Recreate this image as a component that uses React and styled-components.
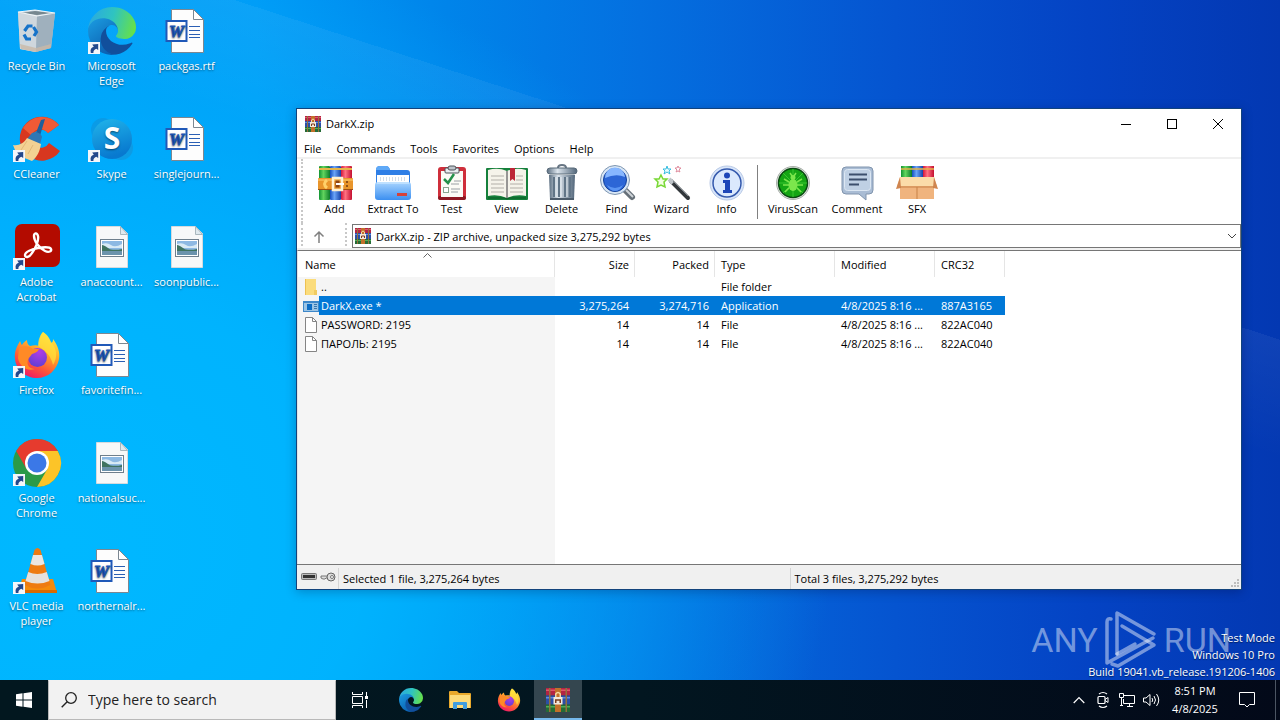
import React from 'react'
import styled, { createGlobalStyle } from 'styled-components'

/* ---------- shared drawings ---------- */

const Svg = styled.svg`
  display: block;
  flex: none;
  overflow: visible;
`

const ShortcutArrow = () => (
  <g>
    <rect x="0" y="35" width="12" height="12" fill="#f4f6fa" />
    <path d="M2.800 46C2 42.500 3.200 40.400 5.800 39.800L4.200 37.400 10.200 37v6L8.300 41.800C6.200 42.600 5.200 44 5.400 46z" fill="#23488c" />
  </g>
)

const RecycleBin = () => (
  <Svg width="48" height="48" viewBox="0 0 48 48" aria-hidden="true">
    <path d="M5 5 22 3l20 3-4 35-16 4-15-3z" fill="#b9c6cf" />
    <path d="M5 5l19 4-1 36-16-3z" fill="#cfd7dd" />
    <path d="M24 9l18-3-4 35-15 4z" fill="#9fb0bd" />
    <path d="M9 6l13-2 16 2-14 2z" fill="#76878f" />
    <path d="M5 5 22 3l20 3-18 3z" fill="none" stroke="#f2f6f8" strokeWidth="1.200" />
    <path d="M7 37l16 4 15-4-.5 4L23 45 8 42z" fill="#c9b9a8" opacity=".8" />
    <g fill="none" stroke="#1673c9" strokeWidth="3.200">
      <path d="M11.500 24l3.500-5h4.500" />
      <path d="M20.500 20l3 5-2.500 4" />
      <path d="M18 32h-4.500l-2.500-4.500" />
    </g>
  </Svg>
)

const EdgeLogo = ({ size = 48, shortcut }) => (
  <Svg width={size} height={size} viewBox="0 0 48 48" aria-hidden="true">
    <defs>
      <linearGradient id="edgeTop" x1="0" y1="0.300" x2="1" y2="0.500">
        <stop offset="0" stopColor="#2aa8e2" />
        <stop offset=".5" stopColor="#2fc4c0" />
        <stop offset="1" stopColor="#66e04a" />
      </linearGradient>
      <linearGradient id="edgeMid" x1="0" y1="0" x2="0.600" y2="1">
        <stop offset="0" stopColor="#1ca0e4" />
        <stop offset="1" stopColor="#0b5fb0" />
      </linearGradient>
    </defs>
    <g transform="scale(.1875)">
      <path
        transform="translate(-4.630 -4.920)"
        d="M235.680 195.460a93.730 93.730 0 0 1-10.540 4.710 101.870 101.870 0 0 1-35.900 6.460c-47.320 0-88.540-32.550-88.540-74.320A31.480 31.480 0 0 1 117.130 105c-42.800 1.800-53.800 46.400-53.800 72.530 0 73.880 68.090 81.370 82.760 81.370 7.910 0 19.840-2.300 27-4.560l1.310-.44a128.340 128.340 0 0 0 66.600-52.800 4 4 0 0 0-5.320-5.640z"
        fill="#114f9c"
      />
      <path
        d="M105.730 241.420A79.200 79.200 0 0 1 83 220.080a80.720 80.720 0 0 1 29.500-120c3.120-1.470 8.450-4.130 15.540-4a32.350 32.350 0 0 1 25.690 13 31.880 31.880 0 0 1 6.360 18.660c0-.21 24.460-79.600-80-79.600-43.900 0-80 41.660-80 78.210a130.150 130.150 0 0 0 12.110 56 128 128 0 0 0 156.380 67.110 75.550 75.550 0 0 1-62.780-8z"
        fill="url(#edgeMid)"
      />
      <path
        d="M152.330 148.860c-.81 1.050-3.300 2.500-3.300 5.660 0 2.610 1.700 5.120 4.720 7.230 14.380 10 41.490 8.680 41.560 8.680a59.560 59.560 0 0 0 30.270-8.350 61.380 61.380 0 0 0 30.430-52.880c.26-22.410-8-37.310-11.340-43.910C223.460 23.840 177.720 0 128 0A128 128 0 0 0 0 126.200c.48-36.540 36.800-66.050 80-66.050 3.500 0 23.460.34 42 10.070 16.340 8.580 24.900 18.940 30.850 29.210 6.180 10.670 7.280 24.150 7.280 29.520s-2.740 13.330-7.800 19.910z"
        fill="url(#edgeTop)"
      />
    </g>
    {shortcut && <ShortcutArrow />}
  </Svg>
)

const WordDoc = () => (
  <Svg width="48" height="48" viewBox="0 0 48 48" aria-hidden="true">
    <path d="M8.500 2.500h22l10 10v33h-32z" fill="#fdfdfd" stroke="#7c8791" />
    <path d="M30.500 2.500v10h10z" fill="#fff" stroke="#7c8791" />
    <path d="M26 19.500h11M26 23.500h11M26 27.500h11M26 30.500h11" stroke="#2b5fb4" />
    <rect x="3.500" y="14" width="20" height="20" fill="#fff" stroke="#2059b8" strokeWidth="2" />
    <text x="13.500" y="30" textAnchor="middle" fontFamily="Liberation Serif, serif" fontWeight="700" fontStyle="italic" fontSize="17" fill="#1c55b5" stroke="#1c55b5" strokeWidth=".8">W</text>
  </Svg>
)

const PictureDoc = () => (
  <Svg width="48" height="48" viewBox="0 0 48 48" aria-hidden="true">
    <path d="M8.500 3.500h24l7 7v34h-31z" fill="#f7f8f8" stroke="#d5dade" />
    <path d="M32.500 3.500v8h7z" fill="#dfe9ee" stroke="#a9b7bd" />
    <rect x="12.500" y="16.500" width="23" height="17" fill="#fff" stroke="#6f7f8c" />
    <rect x="14" y="18" width="20" height="14" fill="#8db9e3" />
    <path d="M14 21q5-2 9 1t11-1v4H14z" fill="#d8eaf5" />
    <path d="M14 22c3 0 6 4 9 4.500s7 .5 11-.5v3H14z" fill="#3f7360" />
    <path d="M14 28h20v4H14z" fill="#6b93ac" />
  </Svg>
)

const CCleaner = () => (
  <Svg width="48" height="48" viewBox="0 0 48 48" aria-hidden="true">
    <path d="M46 10A22 22 0 1 0 47 36L36 28a9 9 0 1 1-1-10z" fill="#d8371f" />
    <path d="M46 10A22 22 0 0 0 10 13l8 7q8-11 17-2z" fill="#f05a35" />
    <path d="M28 5l4-1-6 20-5-1z" fill="#1d5f9c" />
    <path d="M19 18c4-2 9 0 10 4l-2 7-13-5z" fill="#2f77b5" />
    <path d="M14 23l14 6c-1 7-4 13-9 17L4 40 0 30c6 1 11-2 14-7z" fill="#f3d193" />
    <path d="M14 26l-6 9M20 30l-5 9" stroke="#e2b877" fill="none" />
    <ShortcutArrow />
  </Svg>
)

const Skype = () => (
  <Svg width="48" height="48" viewBox="0 0 48 48" aria-hidden="true">
    <defs>
      <linearGradient id="skype" x1="0" y1="0" x2="0.300" y2="1">
        <stop offset="0" stopColor="#21b5ea" />
        <stop offset="1" stopColor="#0879cf" />
      </linearGradient>
    </defs>
    <circle cx="15" cy="15" r="12" fill="#0a9be6" />
    <circle cx="33" cy="33" r="12" fill="#0d9be4" />
    <circle cx="24" cy="24" r="20" fill="url(#skype)" />
    <text x="24" y="34" textAnchor="middle" fontFamily="Open Sans, sans-serif" fontWeight="700" fontSize="30" fill="#fff">S</text>
    <ShortcutArrow />
  </Svg>
)

const Acrobat = () => (
  <Svg width="48" height="48" viewBox="0 0 48 48" aria-hidden="true">
    <rect x="2" y="1" width="45" height="43" rx="7" fill="#b30b00" />
    <path
      d="M12 32c0-3 7-6 13-7s12-1 13 1-2 4-6 2c-6-3-11-10-11-15 0-3 3-4 4 0 1 5-3 13-6 17-3 5-7 5-7 2z"
      fill="none"
      stroke="#fff"
      strokeWidth="2.400"
      strokeLinejoin="round"
    />
    <ShortcutArrow />
  </Svg>
)

const Firefox = ({ size = 48, shortcut }) => (
  <Svg width={size} height={size} viewBox="0 0 48 48" aria-hidden="true">
    <defs>
      <linearGradient id="ffBody" x1="0.800" y1="0" x2="0.300" y2="1">
        <stop offset="0" stopColor="#fff04c" />
        <stop offset=".35" stopColor="#ffb52a" />
        <stop offset=".7" stopColor="#ff5a36" />
        <stop offset="1" stopColor="#ef1769" />
      </linearGradient>
      <radialGradient id="ffGlobe" cx=".6" cy=".2" r=".9">
        <stop offset="0" stopColor="#b13be8" />
        <stop offset="1" stopColor="#5a3fd0" />
      </radialGradient>
    </defs>
    <path d="M30 1c5 3 7 7 8 11 2-1 2-2 2-4 5 7 7 13 6 20-2 11-11 19-22 19S3 39 2 28C1 21 4 15 7 10c1 2 1 3 2 4 1-2 3-4 5-5 0 3 1 5 3 6 4-1 7-1 9 0 0-6 1-11 4-14z" fill="url(#ffBody)" />
    <path d="M30 1c5 4 7 9 11 14 3 6 3 13-1 19-2-9-7-14-15-19 0-6 2-11 5-14z" fill="#ffe23d" opacity=".7" />
    <circle cx="24.500" cy="26.500" r="9.500" fill="url(#ffGlobe)" />
    <path d="M6 17c5-3 11-2 14 1h6c-1 3-4 4-7 5-1 2-3 3-4 6-2 5 2 9 7 9-9 3-16-4-17-11z" fill="#ff8a26" />
    {shortcut && <ShortcutArrow />}
  </Svg>
)

const Chrome = () => (
  <Svg width="48" height="48" viewBox="0 0 48 48" aria-hidden="true">
    <circle cx="24" cy="24" r="24" fill="#2b9a48" />
    <path d="M3.200 12A24 24 0 0 1 44.800 12H24L13.600 30z" fill="#e63b2e" />
    <path d="M44.800 12A24 24 0 0 1 24 48l10.400-18L24 12z" fill="#fcc428" />
    <circle cx="24" cy="24" r="12" fill="#fff" />
    <circle cx="24" cy="24" r="9.500" fill="#3b78e7" />
    <ShortcutArrow />
  </Svg>
)

const Vlc = () => (
  <Svg width="48" height="48" viewBox="0 0 48 48" aria-hidden="true">
    <path d="M9 32h31l4 14H5z" fill="#f58a0b" />
    <path d="M5 43h39v3H5z" fill="#d96a00" />
    <path d="M21.500 3q3-4 6 0l10 35q-13 7-26 0z" fill="#ee7b12" />
    <path d="M20 8h9l2.500 9q-7 3-14 0z" fill="#ebe6e2" />
    <path d="M15.200 25q9 4 18.600 0l2.700 9q-12 5-24 0z" fill="#e6e1dd" />
    <ShortcutArrow />
  </Svg>
)

// stacked books tied with a strap, used for the window and taskbar
const ArchiveIcon = ({ size = 16 }) => (
  <Svg width={size} height={size} viewBox="0 0 16 16" aria-hidden="true">
    <rect x="0" y="0" width="16" height="5" fill="#b32443" />
    <rect x="0" y="1" width="16" height="1" fill="#e0586a" />
    <rect x="0" y="5" width="16" height="6" fill="#2c4fa6" />
    <rect x="0" y="6" width="16" height="1" fill="#5f8be0" />
    <rect x="0" y="11" width="16" height="5" fill="#256b36" />
    <rect x="0" y="12" width="16" height="1" fill="#4fae55" />
    <path d="M2 0h1v16H2zM13 0h1v16h-1z" fill="#94703c" />
    <rect x="6" y="0" width="4" height="16" fill="#c2702a" />
    <rect x="5" y="6" width="6" height="5" fill="#f3e8da" />
    <path d="M6.500 6V4q1.500-2 3 0v2" fill="none" stroke="#f3d9a4" />
    <path d="M6.500 10V8h3v2" fill="none" stroke="#7a3c1c" />
  </Svg>
)

/* ---------- toolbar drawings, all on a 36px canvas ---------- */

const ToolSvg = ({ width = 36, children }) => (
  <Svg width={width} height="36" viewBox={`0 0 ${width} 36`} aria-hidden="true">
    <defs>
      <linearGradient id="tbBlue" x1="0" y1="0" x2="0" y2="1">
        <stop offset="0" stopColor="#a9d5ff" />
        <stop offset="1" stopColor="#3b8ff0" />
      </linearGradient>
      <linearGradient id="tbSteel" x1="0" y1="0" x2="1" y2="0">
        <stop offset="0" stopColor="#5b6e80" />
        <stop offset=".35" stopColor="#dbe4ec" />
        <stop offset="1" stopColor="#52667a" />
      </linearGradient>
      <linearGradient id="tbGreenBook" x1="0" y1="0" x2="1" y2="0">
        <stop offset="0" stopColor="#119432" />
        <stop offset=".4" stopColor="#62d45e" />
        <stop offset="1" stopColor="#0c7d2a" />
      </linearGradient>
      <linearGradient id="tbBlueBook" x1="0" y1="0" x2="1" y2="0">
        <stop offset="0" stopColor="#154fc0" />
        <stop offset=".4" stopColor="#6ba4f7" />
        <stop offset="1" stopColor="#1442a8" />
      </linearGradient>
      <linearGradient id="tbRedBook" x1="0" y1="0" x2="1" y2="0">
        <stop offset="0" stopColor="#d3163a" />
        <stop offset=".4" stopColor="#ff7282" />
        <stop offset="1" stopColor="#c40f30" />
      </linearGradient>
    </defs>
    {children}
  </Svg>
)

const AddIcon = () => (
  <ToolSvg>
    <rect x="2" y="1" width="11" height="34" rx="1" fill="url(#tbGreenBook)" />
    <rect x="13" y="1" width="11" height="34" rx="1" fill="url(#tbBlueBook)" />
    <rect x="24" y="1" width="11" height="34" rx="1" fill="url(#tbRedBook)" />
    <path d="M2 4h11M13 4h11M24 4h11" stroke="#e6b64a" strokeWidth="2" />
    <rect x="1" y="13" width="35" height="12" rx="1" fill="#e9952b" />
    <path d="M1 15h35" stroke="#ffcf72" />
    <path d="M1 24.500h35" stroke="#9d4f12" />
    <path d="M10 15q-5 4 0 8" fill="none" stroke="#ffd06a" strokeWidth="3" />
    <rect x="16" y="13" width="9" height="12" fill="none" stroke="#fff0d0" strokeWidth="2.500" />
    <path d="M18.500 15.500h4v7h-4z" fill="#8d4312" />
    <path d="M19 19h8" stroke="#fff" strokeWidth="2" />
    <circle cx="30" cy="17" r="1" fill="#713a12" />
    <circle cx="30" cy="21" r="1" fill="#713a12" />
  </ToolSvg>
)

const ExtractIcon = () => (
  <ToolSvg>
    <path d="M1 5q0-4 4-4h6q3 0 4 4h17q3 0 3 3v14H1z" fill="#2f7fe6" />
    <path d="M1 5q0-4 4-4h6q3 0 4 4z" fill="#5fa9f7" />
    <path d="M2 10h32v8H2z" fill="#fff" />
    <path d="M5 13h27M5 15h27" stroke="#a6bcd2" strokeDasharray="1 2" />
    <rect x="0" y="17" width="36" height="18" rx="3" fill="url(#tbBlue)" />
    <path d="M2 18h32" stroke="#d9efff" />
    <rect x="22" y="28" width="10" height="3" fill="#d5423a" />
  </ToolSvg>
)

const TestIcon = () => (
  <ToolSvg>
    <rect x="4" y="2" width="28" height="33" rx="3" fill="#cf2f3b" />
    <rect x="4" y="31" width="28" height="4" rx="2" fill="#8e1822" />
    <rect x="7" y="6" width="22" height="26" fill="#fbfbf6" />
    <rect x="11" y="3" width="14" height="5" rx="1" fill="#e9edf0" stroke="#4d5358" />
    <rect x="14" y="1" width="8" height="4" rx="2" fill="#bcc4ca" stroke="#4d5358" />
    <path d="M10 14l4 4 6-9" fill="none" stroke="#25904a" strokeWidth="2.500" />
    <rect x="9.500" y="22.500" width="5" height="5" fill="#fff" stroke="#8aa58f" />
    <path d="M20 16h7M17 19h8M17 24h9M17 27h7" stroke="#9aa0a5" />
  </ToolSvg>
)

const ViewIcon = () => (
  <ToolSvg width={44}>
    <rect x="1" y="3" width="42" height="32" rx="1" fill="#15803b" />
    <path d="M3 5q10-3 19 1 9-4 19-1v26q-10-2-19 2-9-4-19-2z" fill="#f5f3ea" />
    <path d="M22 6v27" stroke="#777" strokeWidth="1.500" />
    <path d="M6 11h13M6 15h13M6 19h13M6 23h13M6 27h13M25 19h13M25 23h13M25 27h13M31 11h7M31 15h7" stroke="#b2afa8" />
    <path d="M25 3h5v13l-2.500-2-2.500 2z" fill="#bd2637" />
    <path d="M3 33h16l3 1 3-1h16" stroke="#0b5a25" fill="none" />
  </ToolSvg>
)

const DeleteIcon = () => (
  <ToolSvg>
    <path d="M14 3q0-3 4-3t4 3" fill="none" stroke="#687684" strokeWidth="2" />
    <rect x="3" y="3" width="30" height="6" rx="3" fill="url(#tbSteel)" stroke="#596a79" />
    <path d="M5 10h26l-1 25H6z" fill="url(#tbSteel)" />
    <path d="M10 12v20M15 12v20M21 12v20M26 12v20" stroke="#617587" strokeWidth="2" />
    <path d="M12 12v20M17 12v20M23 12v20" stroke="#e9f0f5" />
    <path d="M6 33h24v2H6z" fill="#4c5c6b" />
  </ToolSvg>
)

const FindIcon = () => (
  <ToolSvg>
    <path d="M27 26l6 6" stroke="#667078" strokeWidth="6" strokeLinecap="round" />
    <path d="M27 25l7 7" stroke="#cfd4d8" strokeWidth="2" />
    <circle cx="16" cy="15" r="14.500" fill="#d8e6f5" stroke="#7f97b2" />
    <circle cx="16" cy="15" r="11.500" fill="#2c66d6" stroke="#12419c" />
    <path d="M6 13a10 10 0 0 1 20-1q-9-4-20 1z" fill="#87b7ff" />
    <path d="M8 20q8 6 16 0-3 6-8 6t-8-6z" fill="#5a95f3" />
  </ToolSvg>
)

const WizardIcon = () => (
  <ToolSvg>
    <path d="M17 16l17 17" stroke="#33383c" strokeWidth="4" strokeLinecap="round" />
    <path d="M15 14l4 4" stroke="#bfc5ca" strokeWidth="4" />
    <path d="M19 16l15 15" stroke="#7d858b" />
    <path d="M7 10l2 4 4 0-3 3 1 5-4-2-4 2 1-5-3-3 4 0z" fill="#f2ffe2" stroke="#79d836" strokeWidth="1.500" />
    <path d="M13 1l1 3 3 0-2 2 1 3-3-2-3 2 1-3-2-2 3 0z" fill="#e6fbff" stroke="#39bde0" />
    <path d="M24 1l1 2 2 0-2 2 1 2-2-1-2 1 1-2-2-2 2 0z" fill="#fff" stroke="#df8b9d" />
  </ToolSvg>
)

const InfoIcon = () => (
  <ToolSvg>
    <circle cx="18" cy="18" r="17" fill="#d9e6fa" stroke="#b8c9e6" />
    <circle cx="18" cy="18" r="14" fill="#dbe9fd" stroke="#3459ad" strokeWidth="1.500" />
    <circle cx="18" cy="10.500" r="3" fill="#1d46b8" />
    <path d="M14 15h7v10h2v3h-9v-3h2v-7h-2z" fill="#1d46b8" />
  </ToolSvg>
)

const VirusIcon = () => (
  <ToolSvg>
    <circle cx="18" cy="18" r="16.500" fill="#dfe3df" stroke="#aab0ab" />
    <circle cx="18" cy="18" r="14.500" fill="#14a514" stroke="#0a4a12" strokeWidth="1.500" />
    <path d="M18 4v28M4 18h28M8 8l20 20M28 8L8 28" stroke="#41cf37" strokeWidth=".8" />
    <ellipse cx="18" cy="20" rx="4.500" ry="6" fill="#7be64c" />
    <circle cx="18" cy="12.500" r="2.500" fill="#7be64c" />
    <path d="M9 14l5 3M27 14l-5 3M8 20h6M28 20h-6M10 27l4-4M26 27l-4-4M15 8l2 3M21 8l-2 3" stroke="#7be64c" strokeWidth="1.500" />
  </ToolSvg>
)

const CommentIcon = () => (
  <ToolSvg>
    <path d="M7 2h23q4 0 4 4v19q0 4-4 4h-3v6l-7-6H7q-4 0-4-4V6q0-4 4-4z" fill="#a9bcd4" stroke="#8195ae" />
    <rect x="5.500" y="4.500" width="26" height="21" rx="3" fill="#bfd0e4" stroke="#dce7f3" />
    <path d="M10 9.500h18M10 14.500h18M10 19.500h10" stroke="#3c4f6d" strokeWidth="2" />
  </ToolSvg>
)

const SfxIcon = () => (
  <ToolSvg width={42}>
    <rect x="5" y="1" width="11" height="14" fill="url(#tbGreenBook)" />
    <rect x="16" y="1" width="11" height="14" fill="url(#tbBlueBook)" />
    <rect x="27" y="1" width="11" height="14" fill="url(#tbRedBook)" />
    <path d="M5 4h33" stroke="#e6b64a" strokeWidth="1.500" />
    <path d="M4 14h34v20H4z" fill="#f0b47e" />
    <path d="M4 12h34l3 9H1z" fill="#fbdca9" />
    <path d="M4 12L0 24l5-1zM38 12l4 12-5-1z" fill="#cf8550" />
    <path d="M21 22v12M4 22h34" stroke="#c78147" />
  </ToolSvg>
)

/* ---------- data ---------- */

const desktopIcons = [
  { label: 'Recycle Bin', icon: <RecycleBin /> },
  { label: 'CCleaner', icon: <CCleaner /> },
  { label: 'Adobe Acrobat', icon: <Acrobat /> },
  { label: 'Firefox', icon: <Firefox shortcut /> },
  { label: 'Google Chrome', icon: <Chrome /> },
  { label: 'VLC media player', icon: <Vlc /> },
  { label: 'Microsoft Edge', icon: <EdgeLogo shortcut /> },
  { label: 'Skype', icon: <Skype /> },
  { label: 'anaccount...', icon: <PictureDoc /> },
  { label: 'favoritefin...', icon: <WordDoc /> },
  { label: 'nationalsuc...', icon: <PictureDoc /> },
  { label: 'northernalr...', icon: <WordDoc /> },
  { label: 'packgas.rtf', icon: <WordDoc /> },
  { label: 'singlejourn...', icon: <WordDoc /> },
  { label: 'soonpublic...', icon: <PictureDoc /> },
]

const menus = ['File', 'Commands', 'Tools', 'Favorites', 'Options', 'Help']

const archiveTools = [
  { label: 'Add', icon: <AddIcon /> },
  { label: 'Extract To', icon: <ExtractIcon />, width: 62 },
  { label: 'Test', icon: <TestIcon /> },
  { label: 'View', icon: <ViewIcon /> },
  { label: 'Delete', icon: <DeleteIcon /> },
  { label: 'Find', icon: <FindIcon /> },
  { label: 'Wizard', icon: <WizardIcon /> },
  { label: 'Info', icon: <InfoIcon /> },
]

const extraTools = [
  { label: 'VirusScan', icon: <VirusIcon />, width: 66 },
  { label: 'Comment', icon: <CommentIcon />, width: 62 },
  { label: 'SFX', icon: <SfxIcon />, width: 58 },
]

const files = [
  { name: '..', kind: 'folder', type: 'File folder' },
  { name: 'DarkX.exe *', kind: 'exe', size: '3,275,264', packed: '3,274,716', type: 'Application', modified: '4/8/2025 8:16 ...', crc: '887A3165', selected: true },
  { name: 'PASSWORD: 2195', kind: 'file', size: '14', packed: '14', type: 'File', modified: '4/8/2025 8:16 ...', crc: '822AC040' },
  { name: 'ПАРОЛЬ: 2195', kind: 'file', size: '14', packed: '14', type: 'File', modified: '4/8/2025 8:16 ...', crc: '822AC040' },
]

const FileIcon = ({ kind }) => (
  <Svg width="16" height="16" viewBox="0 0 16 16" aria-hidden="true">
    {kind === 'folder' && (
      <g>
        <path d="M2 0h11v11l1 1v4H2z" fill="#fbdc7c" />
        <path d="M2 0h1v16H2z" fill="#eec150" />
        <path d="M11 11h3v5h-3z" fill="#f1cb60" />
      </g>
    )}
    {kind === 'exe' && (
      <g>
        <rect x="0" y="3" width="16" height="11" fill="#3d87c9" />
        <rect x="1" y="5" width="14" height="8" fill="#9cc4e4" />
        <rect x="4" y="6" width="5" height="6" fill="#0b6cc4" />
        <path d="M11 6.500h3M11 8.500h3M11 10.500h3" stroke="#3876ae" />
      </g>
    )}
    {kind === 'file' && (
      <g>
        <path d="M2.500.5h7l4 4v11h-11z" fill="#fff" stroke="#858585" />
        <path d="M9.500.5v4h4" fill="none" stroke="#858585" />
      </g>
    )}
  </Svg>
)

/* ---------- app ---------- */

const ArchiveWindow = () => (
  <Window>
    <TitleBar>
      <ArchiveIcon />
      <Title>DarkX.zip</Title>
      <WindowButton aria-label="Minimize">
        <Svg width="10" height="10"><path d="M0 5.500h10" stroke="#000" /></Svg>
      </WindowButton>
      <WindowButton aria-label="Maximize">
        <Svg width="10" height="10"><rect x=".5" y=".5" width="9" height="9" fill="none" stroke="#000" /></Svg>
      </WindowButton>
      <WindowButton aria-label="Close">
        <Svg width="10" height="10"><path d="M0 0l10 10M10 0L0 10" stroke="#000" /></Svg>
      </WindowButton>
    </TitleBar>
    <MenuBar>
      {menus.map((name) => <MenuItem key={name}>{name}</MenuItem>)}
    </MenuBar>
    <Toolbar>
      {archiveTools.map((tool) => (
        <ToolButton key={tool.label} $width={tool.width}>
          {tool.icon}
          <span>{tool.label}</span>
        </ToolButton>
      ))}
      <ToolDivider />
      {extraTools.map((tool) => (
        <ToolButton key={tool.label} $width={tool.width}>
          {tool.icon}
          <span>{tool.label}</span>
        </ToolButton>
      ))}
    </Toolbar>
    <AddressRow>
      <UpButton aria-label="Up one level">
        <Svg width="12" height="12" viewBox="0 0 12 12"><path d="M6 12V1M1.500 5.500L6 1l4.500 4.500" fill="none" stroke="#808080" strokeWidth="1.500" /></Svg>
      </UpButton>
      <AddressBox>
        <ArchiveIcon />
        <select aria-label="Archive path" defaultValue="zip">
          <option value="zip">DarkX.zip - ZIP archive, unpacked size 3,275,292 bytes</option>
        </select>
        <Svg width="10" height="6" viewBox="0 0 10 6"><path d="M1 1l4 4 4-4" fill="none" stroke="#444" /></Svg>
      </AddressBox>
    </AddressRow>
    <FileList>
      <FileTable>
        <colgroup>
          <col width="257" />
          <col width="80" />
          <col width="80" />
          <col width="120" />
          <col width="100" />
          <col width="70" />
        </colgroup>
        <thead>
          <tr>
            <HeadCell $first>
              Name
              <SortMark width="9" height="5" viewBox="0 0 9 5"><path d="M.5 4.500l4-4 4 4" fill="none" stroke="#666" /></SortMark>
            </HeadCell>
            <HeadCell $right>Size</HeadCell>
            <HeadCell $right>Packed</HeadCell>
            <HeadCell>Type</HeadCell>
            <HeadCell>Modified</HeadCell>
            <HeadCell>CRC32</HeadCell>
          </tr>
        </thead>
        <tbody>
          {files.map((file) => (
            <tr key={file.name}>
              <NameCell $selected={file.selected}>
                <div>
                  <FileIcon kind={file.kind} />
                  <span>{file.name}</span>
                </div>
              </NameCell>
              <Cell $right $selected={file.selected}>{file.size}</Cell>
              <Cell $right $selected={file.selected}>{file.packed}</Cell>
              <Cell $selected={file.selected}>{file.type}</Cell>
              <Cell $selected={file.selected}>{file.modified}</Cell>
              <Cell $selected={file.selected}>{file.crc}</Cell>
            </tr>
          ))}
        </tbody>
      </FileTable>
    </FileList>
    <StatusBar>
      <StatusIcons>
        <Svg width="16" height="10" viewBox="0 0 16 10"><rect x=".5" y="1.500" width="15" height="6" rx="1" fill="#bbb" stroke="#777" /><rect x="2" y="3" width="12" height="3" fill="#333" /></Svg>
        <Svg width="16" height="10" viewBox="0 0 16 10">
          <path d="M8 4H1v2l2 1h2l1-1h2" fill="#ddd" stroke="#777" />
          <circle cx="11" cy="5" r="4" fill="#ddd" stroke="#666" />
          <circle cx="12" cy="5" r="1.500" fill="#fff" stroke="#777" />
        </Svg>
      </StatusIcons>
      <StatusText>Selected 1 file, 3,275,264 bytes</StatusText>
      <StatusText>Total 3 files, 3,275,292 bytes</StatusText>
      <ResizeGrip width="8" height="8" viewBox="0 0 8 8"><path d="M6 0h2v2H6zM3 3h2v2H3zM6 3h2v2H6zM0 6h2v2H0zM3 6h2v2H3zM6 6h2v2H6z" fill="#bdbdbd" /></ResizeGrip>
    </StatusBar>
  </Window>
)

const Watermark = () => (
  <Brand>
    <span>ANY</span>
    <Svg width="54" height="60" viewBox="0 0 54 60" aria-hidden="true">
      <g fill="none" stroke="currentColor" strokeWidth="3.500" strokeLinejoin="round" strokeLinecap="round">
        <path d="M7 9q-4-1-4 3v41l46-25" />
        <path d="M50 24L13 3v41" />
        <path d="M18 16l32 19-36 21-6-2" />
        <path d="M13 44l18-10" />
      </g>
    </Svg>
    <span>RUN</span>
  </Brand>
)

const App = () => (
  <Screen>
    <GlobalStyle />
    <Desktop>
      <IconGrid>
        {desktopIcons.map((item) => (
          <DesktopIcon key={item.label} href="#">
            {item.icon}
            <span>{item.label}</span>
          </DesktopIcon>
        ))}
      </IconGrid>
      <Watermark />
      <ArchiveWindow />
      <BuildInfo>
        <p>Test Mode</p>
        <p>Windows 10 Pro</p>
        <p>Build 19041.vb_release.191206-1406</p>
      </BuildInfo>
    </Desktop>
    <Taskbar>
      <TaskButton aria-label="Start">
        <Svg width="16" height="16" viewBox="0 0 16 16"><path d="M0 2.200L6.500 1.300V7.500H0zM7.500 1.200L16 0v7.500H7.500zM0 8.500h6.500v6.200L0 13.800zM7.500 8.500H16V16l-8.500-1.200z" fill="#fff" /></Svg>
      </TaskButton>
      <SearchBox>
        <Svg width="16" height="16" viewBox="0 0 16 16"><circle cx="10" cy="6" r="5.300" fill="none" stroke="#222" strokeWidth="1.300" /><path d="M6.200 9.800L.7 15.300" stroke="#222" strokeWidth="1.400" /></Svg>
        <input type="text" aria-label="Search" placeholder="Type here to search" />
      </SearchBox>
      <TaskButton aria-label="Task view">
        <Svg width="18" height="18" viewBox="0 0 18 18">
          <path d="M1.500 1v2.500h10V1M1.500 17v-2.500h10V17M1.500 5.500h10v7h-10zM15.500 1v4M15.500 9v8" fill="none" stroke="#fff" />
          <rect x="14" y="5" width="3" height="3" fill="#fff" />
        </Svg>
      </TaskButton>
      <PinnedApps>
        <TaskButton aria-label="Microsoft Edge"><EdgeLogo size={24} /></TaskButton>
        <TaskButton aria-label="File Explorer">
          <Svg width="22" height="20" viewBox="0 0 22 20">
            <path d="M0 2q0-1 1-1h7l2 2h11q1 0 1 1v14H0z" fill="#e9a92c" />
            <path d="M1 5h20v13H1z" fill="#fddb7a" />
            <path d="M4 19v-6q0-1 1-1h12q1 0 1 1v6h-4v-4H8v4z" fill="#3f9ddf" />
          </Svg>
        </TaskButton>
        <TaskButton aria-label="Firefox"><Firefox size={24} /></TaskButton>
        <TaskButton aria-label="DarkX.zip" $active><ArchiveIcon size={24} /></TaskButton>
      </PinnedApps>
      <Tray>
        <TrayButton aria-label="Show hidden icons">
          <Svg width="12" height="8" viewBox="0 0 12 8"><path d="M.7 7L6 1.500 11.300 7" fill="none" stroke="#fff" strokeWidth="1.200" /></Svg>
        </TrayButton>
        <TrayButton aria-label="Meet now">
          <Svg width="12" height="16" viewBox="0 0 12 16">
            <path d="M2 2q4-3 8 0M2 14q4 3 8 0" fill="none" stroke="#fff" strokeWidth="1.200" />
            <rect x="1" y="4.500" width="7" height="7" rx="1" fill="none" stroke="#fff" strokeWidth="1.200" />
            <path d="M8 7.500l3-2v5l-3-2" fill="none" stroke="#fff" />
          </Svg>
        </TrayButton>
        <TrayButton aria-label="Network">
          <Svg width="16" height="14" viewBox="0 0 16 14"><path d="M5 2.500h10.500v8H4.500V6M8 13.500h6M10.500 10.500v3M.5.500h4v4h-4zM2.500 4.500v8M1 12.500h3" fill="none" stroke="#fff" /></Svg>
        </TrayButton>
        <TrayButton aria-label="Volume">
          <Svg width="17" height="14" viewBox="0 0 17 14"><path d="M.5 5h2.500l4-3.500v11L3 9H.5zM9 5q1.500 2 0 4M11 3q3 4 0 8M13.500 1q4.500 6 0 12" fill="none" stroke="#fff" /></Svg>
        </TrayButton>
        <Clock>
          <span>8:51 PM</span>
          <span>4/8/2025</span>
        </Clock>
        <NoticeButton aria-label="Notifications">
          <Svg width="16" height="16" viewBox="0 0 16 16"><path d="M.5.500h15v12h-5L8 15l-2.500-2.500h-5z" fill="none" stroke="#fff" /></Svg>
        </NoticeButton>
        <ShowDesktop aria-label="Show desktop" />
      </Tray>
    </Taskbar>
  </Screen>
)

/* ---------- styles ---------- */

const GlobalStyle = createGlobalStyle`
  * {
    box-sizing: border-box;
  }

  body {
    margin: 0;
    font-family: 'Open Sans', 'Noto Sans', sans-serif;
    font-size: 11px;
    line-height: 15px;
    color: #000;
  }

  button, input, select {
    font: inherit;
    color: inherit;
    border: 0;
    padding: 0;
    background: none;
    outline: none;
  }
`

const Screen = styled.div`
  height: 100vh;
  display: flex;
  flex-direction: column;
  overflow: hidden;
`

const Desktop = styled.main`
  position: relative;
  flex: 1;
  background:
    linear-gradient(198deg, transparent 31%, rgba(255, 255, 255, 0.05) 31%, transparent 42%),
    radial-gradient(ellipse 60% 90% at 5% 80%, #00b8ff 0%, rgba(0, 182, 255, 0.9) 40%, rgba(0, 170, 255, 0) 100%),
    linear-gradient(90deg, #009ff8 0%, #009af6 20%, #0084ea 35%, #0470e0 50%, #0554d0 70%, #0443c4 85%, #0338b2 100%);
`

const IconGrid = styled.nav`
  display: grid;
  grid-template-rows: repeat(6, 108px);
  grid-auto-columns: 75px;
  grid-auto-flow: column;
  width: max-content;
`

const DesktopIcon = styled.a`
  display: flex;
  flex-direction: column;
  align-items: center;
  gap: 3px;
  padding: 7px 2px 0 0;
  color: #fff;
  text-align: center;
  text-decoration: none;
  text-shadow: 0 1px 2px rgba(0, 0, 0, 0.5);

  span {
    width: 72px;
  }
`

const Window = styled.section`
  position: absolute;
  top: 108px;
  left: 296px;
  right: 38px;
  bottom: 90px;
  display: flex;
  flex-direction: column;
  background: #fff;
  border: 1px solid #12437c;
  box-shadow: 0 2px 10px rgba(0, 0, 40, 0.25);
`

const TitleBar = styled.header`
  display: flex;
  align-items: center;
  height: 29px;
  padding-left: 8px;
`

const Title = styled.h1`
  flex: 1;
  margin: 0;
  padding-left: 5px;
  font-size: 11px;
  font-weight: 400;
`

const WindowButton = styled.button`
  display: flex;
  align-items: center;
  justify-content: center;
  width: 46px;
  height: 28px;
`

const MenuBar = styled.nav`
  display: flex;
  gap: 15px;
  height: 21px;
  padding: 1px 0 0 7px;
  border-bottom: 2px solid #f0f0f0;
`

const MenuItem = styled.button`
  height: 18px;
`

const Toolbar = styled.div`
  display: flex;
  height: 64px;
  margin-left: 4px;
  padding: 6px 0 0 4px;
  border-left: 2px dotted #c8c8c8;
`

const ToolButton = styled.button`
  display: flex;
  flex-direction: column;
  align-items: center;
  width: ${({ $width }) => $width || 55}px;
  white-space: nowrap;
`

const ToolDivider = styled.div`
  width: 1px;
  height: 54px;
  margin: 0 2px 0 3px;
  background: #808080;
`

const AddressRow = styled.div`
  display: flex;
  height: 27px;
  margin-left: 4px;
  border-left: 2px dotted #c8c8c8;
`

const UpButton = styled.button`
  display: flex;
  align-items: center;
  width: 44px;
  padding-left: 10px;
  border-right: 2px dotted #c8c8c8;
`

const AddressBox = styled.div`
  flex: 1;
  display: flex;
  align-items: center;
  height: 24px;
  margin: 1px 0 1px 5px;
  padding: 0 3px 0 2px;
  border: 1px solid #767676;

  select {
    flex: 1;
    appearance: none;
    padding-left: 5px;
  }
`

const FileList = styled.div`
  flex: 1;
  border-top: 1px solid #767676;
  border-left: 1px solid #e4e4e4;
  box-shadow: 0 -2px 0 #f0f0f0;
  background: linear-gradient(#f5f5f5, #f5f5f5) 0 0 / 257px 100% no-repeat #fff;
`

const FileTable = styled.table`
  width: 707px;
  table-layout: fixed;
  border-collapse: collapse;
`

const HeadCell = styled.th`
  position: relative;
  height: 26px;
  padding: ${({ $first }) => ($first ? '0 0 0 7px' : '0 6px')};
  font-weight: 400;
  text-align: ${({ $right }) => ($right ? 'right' : 'left')};
  background: #fff;
  box-shadow: inset -1px 0 0 #e5e5e5;
`

const SortMark = styled.svg`
  position: absolute;
  top: 2px;
  left: calc(50% - 4px);
`

const Cell = styled.td`
  height: 19px;
  padding: 0 6px;
  text-align: ${({ $right }) => ($right ? 'right' : 'left')};
  white-space: nowrap;
  color: ${({ $selected }) => ($selected ? '#fff' : '#000')};
  background: ${({ $selected }) => ($selected ? '#0078d7' : 'transparent')};
`

const NameCell = styled.td`
  height: 19px;
  padding: 0 0 0 5px;

  div {
    display: flex;
    align-items: center;
  }

  span {
    flex: 1;
    line-height: 19px;
    padding-left: 2px;
    color: ${({ $selected }) => ($selected ? '#fff' : '#000')};
    background: ${({ $selected }) => ($selected ? '#0078d7' : 'transparent')};
  }
`

const StatusBar = styled.footer`
  position: relative;
  display: flex;
  align-items: flex-end;
  height: 25px;
  background: #f0f0f0;
  border-top: 1px solid #767676;
`

const StatusIcons = styled.div`
  display: flex;
  align-items: center;
  gap: 3px;
  width: 41px;
  height: 24px;
  padding-left: 4px;
`

const StatusText = styled.div`
  flex: 1;
  padding: 3px 0 3px 4px;
  border-left: 1px solid #d5d5d5;
`

const ResizeGrip = styled.svg`
  position: absolute;
  right: 2px;
  bottom: 2px;
`

const Brand = styled.div`
  position: absolute;
  right: 49px;
  bottom: 10px;
  display: flex;
  align-items: center;
  gap: 6px;
  color: rgba(255, 255, 255, 0.45);
  font-family: Roboto, 'Liberation Sans', sans-serif;
  font-size: 34px;
  line-height: 60px;
`

const BuildInfo = styled.div`
  position: absolute;
  right: 5px;
  bottom: 0;
  color: #fff;
  text-align: right;
  text-shadow: 0 1px 1px rgba(0, 0, 0, 0.5);

  p {
    margin: 0;
    line-height: 17px;
  }
`

const Taskbar = styled.footer`
  display: flex;
  flex: none;
  height: 40px;
  color: #fff;
  background: linear-gradient(90deg, #02171f, #021620 50%, #030919);
`

const TaskButton = styled.button`
  display: flex;
  align-items: center;
  justify-content: center;
  width: 48px;
  background: ${({ $active }) => ($active ? '#34464f' : 'none')};
  box-shadow: ${({ $active }) => ($active ? 'inset 0 -2px 0 #76b9ed' : 'none')};
`

const SearchBox = styled.label`
  display: flex;
  align-items: center;
  gap: 11px;
  width: 288px;
  padding-left: 12px;
  color: #222;
  background: #f2f2f2;
  border: 1px solid #b9b9b9;
  border-top-color: #f2f2f2;

  input {
    flex: 1;
    min-width: 0;
    font-size: 14px;
    line-height: 20px;
  }

  input::placeholder {
    color: #222;
    opacity: 1;
  }
`

const PinnedApps = styled.div`
  display: flex;
  gap: 1px;
  padding-left: 3px;
`

const Tray = styled.div`
  display: flex;
  margin-left: auto;
`

const TrayButton = styled.button`
  display: flex;
  align-items: center;
  justify-content: center;
  width: 24px;
`

const Clock = styled.div`
  display: flex;
  flex-direction: column;
  justify-content: center;
  width: 64px;
  line-height: 18px;
  text-align: center;
`

const NoticeButton = styled(TrayButton)`
  width: 40px;
`

const ShowDesktop = styled.button`
  width: 5px;
  margin-left: 8px;
  border-left: 1px solid #4c5563;
`

export default App
